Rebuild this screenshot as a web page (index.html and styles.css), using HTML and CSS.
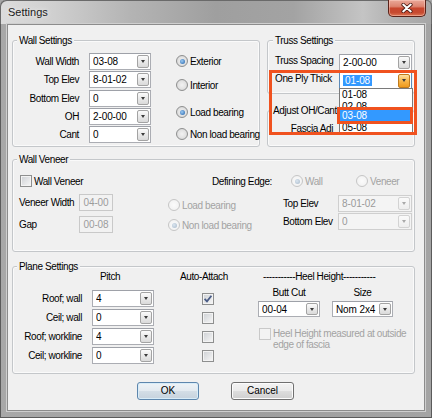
FILE: index.html
```html
<!DOCTYPE html>
<html>
<head>
<meta charset="utf-8">
<title>Settings</title>
<link rel="stylesheet" href="styles.css">
</head>
<body>
<div class="window">
  <div class="titlebar">
    <span class="title">Settings</span>
    <div class="close">
      <svg width="12" height="10" viewBox="0 0 12 10"><path d="M2.2 1.6 L9.8 8.4 M9.8 1.6 L2.2 8.4" stroke="#4a1a12" stroke-width="3.6" stroke-linecap="round"/><path d="M2.2 1.6 L9.8 8.4 M9.8 1.6 L2.2 8.4" stroke="#ffffff" stroke-width="2" stroke-linecap="round"/></svg>
    </div>
  </div>

  <div class="client">
    <div class="top-row">
      <div class="group g-wall">
        <span class="legend">Wall Settings</span>
        <div class="wall-body">
          <div class="fields">
            <span class="lbl-r">Wall Width</span>
            <div class="combo"><span class="v">03-08</span><span class="cb"></span></div>
            <span class="lbl-r">Top Elev</span>
            <div class="combo"><span class="v">8-01-02</span><span class="cb"></span></div>
            <span class="lbl-r">Bottom Elev</span>
            <div class="combo"><span class="v">0</span><span class="cb"></span></div>
            <span class="lbl-r">OH</span>
            <div class="combo"><span class="v">2-00-00</span><span class="cb"></span></div>
            <span class="lbl-r">Cant</span>
            <div class="combo"><span class="v">0</span><span class="cb"></span></div>
          </div>
          <div class="wall-radios">
            <div class="ritem r1"><span class="radio on"></span><span>Exterior</span></div>
            <div class="ritem r2"><span class="radio"></span><span>Interior</span></div>
            <div class="ritem r3"><span class="radio on"></span><span>Load bearing</span></div>
            <div class="ritem r4"><span class="radio"></span><span>Non load bearing</span></div>
          </div>
        </div>
      </div>

      <div class="right-col">
        <div class="group g-truss">
          <span class="legend lg-truss">Truss Settings</span>
          <div class="truss-body">
            <span class="lbl-t">Truss Spacing</span>
            <div class="combo"><span class="v">2-00-00</span><span class="cb"></span></div>
            <span class="lbl-t">One Ply Thick</span>
            <div class="combo focus"><span class="v"><span class="sel">01-08</span></span><span class="cb hot"></span></div>
          </div>
        </div>
        <div class="group g-adjust">
          <span class="legend lg-adjust">Adjust OH/Cant to</span>
          <div class="fascia">Fascia Adj</div>
        </div>
      </div>
    </div>

    <div class="group g-veneer">
      <span class="legend">Wall Veneer</span>
      <div class="veneer-grid">
        <div class="cell a1"><span class="chk"></span><span class="chk-t">Wall Veneer</span></div>
        <div class="cell de">
          <span class="de-lbl">Defining Edge:</span>
          <div class="ritem de-wall"><span class="radio dis on"></span><span class="dis-t">Wall</span></div>
          <div class="ritem"><span class="radio dis"></span><span class="dis-t">Veneer</span></div>
        </div>
        <div class="cell a2"><span class="lbl-v">Veneer Width</span><div class="tb dis">04-00</div></div>
        <div class="cell b2"><div class="ritem"><span class="radio dis"></span><span class="dis-t">Load bearing</span></div></div>
        <div class="cell c2"><span class="lbl-e">Top Elev</span><div class="combo dis"><span class="v">8-01-02</span><span class="cb"></span></div></div>
        <div class="cell a3"><span class="lbl-v">Gap</span><div class="tb dis">00-08</div></div>
        <div class="cell b3"><div class="ritem"><span class="radio dis on"></span><span class="dis-t">Non load bearing</span></div></div>
        <div class="cell c3"><span class="lbl-e">Bottom Elev</span><div class="combo dis"><span class="v">0</span><span class="cb"></span></div></div>
      </div>
    </div>

    <div class="group g-plane">
      <span class="legend">Plane Settings</span>
      <div class="plane-body">
        <div class="pl-grid">
          <span></span>
          <span class="h-pitch">Pitch</span>
          <span class="h-auto">Auto-Attach</span>

          <span class="lbl-p">Roof; wall</span>
          <div class="combo"><span class="v">4</span><span class="cb"></span></div>
          <div class="pc"><span class="chk on"><svg width="10" height="10" viewBox="0 0 10 10"><path d="M1.6 4.8 L4 7.4 L8.4 1.8" fill="none" stroke="#4a5c86" stroke-width="1.8"/></svg></span></div>

          <span class="lbl-p">Ceil; wall</span>
          <div class="combo"><span class="v">0</span><span class="cb"></span></div>
          <div class="pc"><span class="chk"></span></div>

          <span class="lbl-p">Roof; workline</span>
          <div class="combo"><span class="v">4</span><span class="cb"></span></div>
          <div class="pc"><span class="chk"></span></div>

          <span class="lbl-p">Ceil; workline</span>
          <div class="combo"><span class="v">0</span><span class="cb"></span></div>
          <div class="pc"><span class="chk"></span></div>
        </div>

        <div class="heel">
          <div class="heel-h">-----------Heel Height-----------</div>
          <div class="heel-cols">
            <div class="hcol hc-butt">
              <span class="hl">Butt Cut</span>
              <div class="combo sm"><span class="v">00-04</span><span class="cb"></span></div>
            </div>
            <div class="hcol hc-size">
              <span class="hl">Size</span>
              <div class="combo sm"><span class="v">Nom 2x4</span><span class="cb"></span></div>
            </div>
          </div>
          <div class="heel-chk"><span class="chk dis"></span><span class="heel-t">Heel Height measured at outside<br>edge of fascia</span></div>
        </div>
      </div>
    </div>

    <div class="buttons">
      <div class="btn ok">OK</div>
      <div class="btn cancel">Cancel</div>
    </div>
  </div>

  <div class="dropdown">
    <div class="it it1">01-08</div>
    <div class="it it2">02-08</div>
    <div class="it it3">03-08</div>
    <div class="it it4">05-08</div>
  </div>
  <div class="mark mark-big"></div>
  <div class="mark mark-small"></div>
</div>
</body>
</html>
```

FILE: styles.css
```css
* { box-sizing: border-box; }
html, body { margin: 0; padding: 0; }
body {
  width: 432px; height: 418px; overflow: hidden;
  background: #a6a6a6;
  font-family: "Liberation Sans", Arial, sans-serif;
  font-size: 10px; line-height: 13px; letter-spacing: -0.4px; color: #000;
}

.window {
  position: relative; width: 432px; height: 418px;
  display: flex; flex-direction: column;
  background: linear-gradient(to right, #a8a8a8, #9e9e9e 50%, #a4a4a4);
  border-radius: 6px 6px 0 0;
  box-shadow: inset 0 0 0 1px #5b5b5b;
}

/* title bar */
.titlebar {
  height: 24px; flex: none; display: flex; align-items: flex-start;
  border-radius: 6px 6px 0 0;
  background: linear-gradient(to right, #dcdcdc 0%, #d0d0d0 12%, #b4b4b4 30%, #9f9f9f 50%, #a3a3a3 68%, #c4c4c4 84%, #b2b2b2 91%, #a6a6a6 100%);
  box-shadow: inset 1px 1px 0 #6a6a6a, inset -1px 0 0 #6a6a6a;
}
.title {
  margin: 6px 0 0 8px; font-size: 11px; letter-spacing: 0; color: #1b1b1b;
  text-shadow: 0 0 5px rgba(255,255,255,.85);
}
.close {
  margin: 0 6px 0 auto; width: 38px; height: 17px;
  border: 1px solid #5a2219; border-top: 0; border-radius: 0 0 5px 5px;
  background: linear-gradient(#eaa899 0%, #dd8470 40%, #c8462e 52%, #c64a30 78%, #dc7453 100%);
  box-shadow: inset 0 0 0 1px rgba(255,215,205,.45);
  display: flex; align-items: center; justify-content: center;
}

/* client */
.client {
  flex: none; margin: 0 7px; height: 387px;
  background: #f0f0f0; border: 1px solid #8c8c8c;
  box-shadow: 0 0 0 1px #cfcfcf;
  padding-left: 4px;
  display: flex; flex-direction: column;
}

.group {
  border: 1px solid #c4c7ca; border-radius: 3px;
  box-shadow: inset 0 0 0 1px #fafafa;
}
.legend {
  display: block; width: max-content; height: 13px; line-height: 13px;
  margin: -7px 0 0 4px; padding: 0 2px; background: #f0f0f0;
}

/* combos */
.combo {
  display: flex; align-items: center; height: 17px;
  border: 1px solid #abadb3; border-top-color: #9ea1a8; background: #fff;
  padding-left: 3px;
}
.combo .v { flex: 1; letter-spacing: -0.1px; white-space: nowrap; overflow: hidden; }
.cb {
  flex: none; width: 12px; height: 13px; margin-right: 1px;
  border: 1px solid #a3a3a3; border-radius: 2px;
  background: linear-gradient(#fbfbfb, #e9e9e9 50%, #dadada);
  display: flex; align-items: center; justify-content: center;
}
.cb::after {
  content: ""; width: 0; height: 0;
  border-left: 2.5px solid transparent; border-right: 2.5px solid transparent;
  border-top: 3px solid #3b3b3b;
}
.combo.sm { height: 16px; }
.combo.sm .cb { height: 12px; }
.combo.dis { background: #f4f4f4; border-color: #cfcfcf; color: #9a9a9a; }
.combo.dis .cb { border-color: #d3d3d3; background: linear-gradient(#fafafa, #eeeeee); }
.combo.dis .cb::after { border-top-color: #a9a9a9; }
.combo.focus { border-color: #5c8ab8; }
.sel { background: #3399ff; color: #fff; padding: 0 2px; display: inline-block; line-height: 11px; }
.cb.hot {
  border-color: #c07a1c; height: 14px;
  background: linear-gradient(#fde3a6, #f8b64a 50%, #ef9a1c);
}

/* text boxes */
.tb {
  width: 34px; height: 17px; border: 1px solid #c9c9c9;
  background: #f2f2f2; text-align: center; line-height: 15px;
  letter-spacing: -0.1px;
}
.tb.dis { color: #9c9c9c; }

/* radios & checks */
.ritem { display: flex; align-items: center; height: 13px; gap: 2px; white-space: nowrap; }
.radio {
  position: relative; flex: none; width: 12px; height: 12px; border-radius: 50%;
  border: 1px solid #8e8f8f;
  background: radial-gradient(circle at 50% 50%, #f2f2f2 0%, #e2e2e2 55%, #c9c9c9 100%);
}
.radio.on::after {
  content: ""; position: absolute; left: 2.5px; top: 2.5px; width: 5px; height: 5px; border-radius: 50%;
  background: radial-gradient(circle at 40% 40%, #9ccaf2, #1d5ea8);
}
.radio.dis { border-color: #c6c6c6; background: radial-gradient(circle, #fbfbfb, #efefef); }
.radio.dis.on::after { background: radial-gradient(circle at 40% 40%, #dbe6f0, #a7b8c9); }
.dis-t { color: #a3a3a3; }

.chk {
  flex: none; width: 12px; height: 12px; border: 1px solid #8e8f8f;
  background: linear-gradient(135deg, #cdd0d4, #f7f7f7);
  box-shadow: inset 0 0 0 1px #f3f3f3;
  display: flex; align-items: center; justify-content: center;
}
.chk.dis { border-color: #c9c9c9; background: #f3f3f3; box-shadow: none; }

/* wall settings */
.top-row { display: flex; gap: 7px; margin-top: 15px; }
.g-wall { width: 248px; height: 107px; flex: none; }
.wall-body { display: flex; margin-top: 6px; }
.fields {
  display: grid; grid-template-columns: 66px 62px; column-gap: 10px;
  grid-auto-rows: 17px; row-gap: 1.25px; align-items: center;
}
.lbl-r { text-align: right; white-space: nowrap; }
.wall-radios { margin-left: 25px; display: flex; flex-direction: column; }
.r1 { margin-top: 1.5px; }
.r2 { margin-top: 11px; }
.r3 { margin-top: 14px; }
.r4 { margin-top: 9px; }

/* truss */
.right-col { display: flex; flex-direction: column; width: 148px; flex: none; }
.g-truss { height: 54px; }
.lg-truss { margin-left: 5px; }
.truss-body {
  display: grid; grid-template-columns: 64px 73px; grid-auto-rows: 17px; row-gap: 1px;
  margin-top: 7px; padding-left: 7px;
}
.lbl-t { white-space: nowrap; align-self: start; }
.g-adjust { height: 37px; margin-top: 16px; }
.lg-adjust { margin-left: 3px; }
.fascia { width: 65px; text-align: right; margin-top: 4.5px; }

/* veneer */
.g-veneer { width: 403px; height: 93px; margin-top: 12px; }
.veneer-grid {
  display: grid; grid-template-columns: 155px 115px 131px;
  grid-template-rows: 18px 22px 22px; margin-top: 6px;
}
.cell { display: flex; align-items: center; align-self: start; }
.a1 { padding-left: 7px; height: 18px; }
.chk-t { margin-left: 2px; }
.de { grid-column: 2 / 4; padding-left: 44px; height: 18px; }
.de-lbl { width: 79px; white-space: nowrap; }
.de-wall { width: 65px; }
.lbl-v { width: 66px; padding-left: 6px; white-space: nowrap; }
.lbl-e { width: 55px; white-space: nowrap; }
.c2 .combo, .c3 .combo { width: 74px; }
.a2 { margin-top: 4px; }
.b2 { margin-top: 8.5px; }
.c2 { margin-top: 5px; }
.a3 { margin-top: 4px; }
.b3 { margin-top: 6.5px; }
.c3 { margin-top: 1px; }

/* plane */
.g-plane { width: 403px; height: 108px; margin-top: 14px; }
.plane-body { display: flex; margin-top: -3px; }
.pl-grid {
  display: grid; grid-template-columns: 79px 62px 76px;
  grid-template-rows: 18px repeat(4, 17px); row-gap: 2px;
}
.h-pitch { padding-left: 8px; align-self: start; }
.h-auto { padding-left: 26px; align-self: start; white-space: nowrap; }
.lbl-p { text-align: right; padding-right: 10px; white-space: nowrap; align-self: center; }
.pc { display: flex; align-items: center; padding-left: 48px; }

.heel { margin-left: 28px; display: flex; flex-direction: column; }
.heel-h { padding-left: 5px; white-space: nowrap; }
.heel-cols { display: flex; gap: 12px; margin-top: 3px; }
.hcol { display: flex; flex-direction: column; align-items: stretch; }
.hc-butt { width: 62px; }
.hc-size { width: 61px; }
.hl { text-align: center; }
.hcol .combo { margin-top: 2px; }
.heel-chk { display: flex; align-items: flex-start; margin-top: 11px; padding-left: 1px; }
.heel-t { margin-left: 2px; color: #a3a3a3; line-height: 11px; white-space: nowrap; }

/* buttons */
.buttons { display: flex; gap: 32px; margin-top: 8px; padding-left: 125px; }
.btn {
  height: 18px; width: 62px; text-align: center; line-height: 16px;
  border: 1px solid #707070; border-radius: 3px; letter-spacing: 0;
  background: linear-gradient(#f3f3f3 0%, #ebebeb 48%, #dddddd 52%, #cfcfcf 100%);
  box-shadow: inset 0 0 0 1px #fcfcfc;
}
.btn.ok {
  border-color: #5d86ad;
  background: linear-gradient(#eef3f7 0%, #e3eaf0 48%, #d3dde6 52%, #c6d2dd 100%);
  box-shadow: inset 0 0 0 1px #d8ecf8;
}
.btn.cancel { width: 63px; }

/* dropdown overlay */
.dropdown {
  position: absolute; left: 339px; top: 88px; width: 74px; height: 45px;
  background: #fff; border: 1px solid #7a7a7a; overflow: hidden;
}
.it { padding-left: 2px; letter-spacing: -0.1px; }
.it1 { line-height: 12px; height: 12px; }
.it2 { line-height: 12px; height: 9px; overflow: hidden; }
.it3 { line-height: 12px; height: 12px; background: #3399ff; color: #fff; }
.it4 { line-height: 11px; height: 11px; }

.mark { position: absolute; border: 3px solid #f0521f; }
.mark-big { left: 269px; top: 70px; width: 148px; height: 65px; }
.mark-small { left: 337px; top: 107px; width: 76px; height: 17px; }
```
